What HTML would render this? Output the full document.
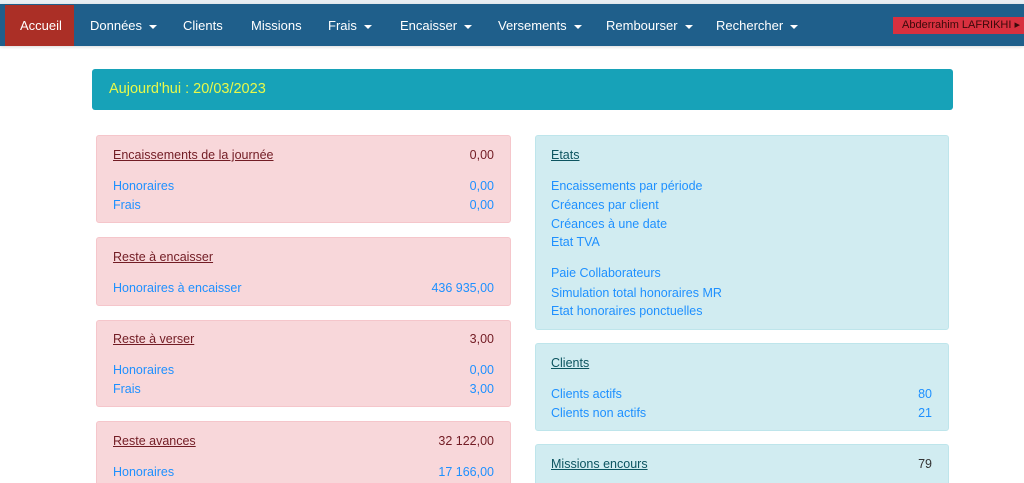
<!DOCTYPE html>
<html><head><meta charset="utf-8"><style>
*{margin:0;padding:0;box-sizing:border-box}
html,body{width:1024px;height:483px;overflow:hidden}
body{background:#fff;font-family:"Liberation Sans",sans-serif;position:relative}
.nav{position:absolute;left:0;top:4px;width:1024px;height:42px;background:#1f5f8b;box-shadow:0 1px 3px rgba(0,0,0,.15)}
.topline{position:absolute;left:0;top:0;width:1024px;height:4px;background:#e8eef3}
.ni{position:absolute;top:18px;color:#fff;font-size:13px;line-height:16px;white-space:nowrap}
.car{display:inline-block;width:0;height:0;border-left:4px solid transparent;border-right:4px solid transparent;border-top:4px solid #fff;margin-left:7px;vertical-align:middle}
.acc{position:absolute;left:5px;top:5px;width:69px;height:41px;background:#ab2f26}
.user{position:absolute;left:893px;top:17px;width:131px;height:17px;background:#d8303f;color:#3a0a0a;font-size:11px;line-height:17px;padding-left:9px;white-space:nowrap;overflow:hidden}
.ban{position:absolute;left:92px;top:69px;width:861px;height:41px;background:#17a2b8;border-radius:3px;color:#e8f94a;font-size:14.5px;line-height:41px;padding-left:17px}
.box{position:absolute;border-radius:3px}
.r{background:#f8d7da;border:1px solid #f5c6cb}
.b{background:#d1ecf1;border:1px solid #bee5eb}
.t{position:absolute;font-size:12.5px;line-height:16px;white-space:nowrap;font-family:"Liberation Sans","DejaVu Sans",sans-serif}
.h{text-decoration:underline}
.hr{color:#721c24}.hb{color:#0c5460}
.l{color:#1e90ff}
</style></head><body>
<div class="topline"></div>
<div class="nav"></div>
<div class="acc"></div>
<div class="ni" style="left:20px">Accueil</div>
<div class="ni" style="left:90px">Données<span class="car"></span></div>
<div class="ni" style="left:183px">Clients</div>
<div class="ni" style="left:251px">Missions</div>
<div class="ni" style="left:328px">Frais<span class="car"></span></div>
<div class="ni" style="left:400px">Encaisser<span class="car"></span></div>
<div class="ni" style="left:498px">Versements<span class="car"></span></div>
<div class="ni" style="left:606px">Rembourser<span class="car"></span></div>
<div class="ni" style="left:716px">Rechercher<span class="car"></span></div>
<div class="user">Abderrahim LAFRIKHI &#x25B8;</div>
<div class="ban">Aujourd'hui : 20/03/2023</div>

<div class="box r" style="left:96px;top:135px;width:415px;height:88px"></div>
<div class="box r" style="left:96px;top:237px;width:415px;height:69px"></div>
<div class="box r" style="left:96px;top:320px;width:415px;height:87px"></div>
<div class="box r" style="left:96px;top:421px;width:415px;height:80px"></div>

<div class="box b" style="left:535px;top:135px;width:414px;height:195px"></div>
<div class="box b" style="left:535px;top:343px;width:414px;height:88px"></div>
<div class="box b" style="left:535px;top:444px;width:414px;height:60px"></div>

<div class="t h hr" style="left:113px;top:147px">Encaissements de la journée</div>
<div class="t hr" style="right:530px;top:147px">0,00</div>
<div class="t l" style="left:113px;top:178px">Honoraires</div>
<div class="t l" style="right:530px;top:178px">0,00</div>
<div class="t l" style="left:113px;top:197px">Frais</div>
<div class="t l" style="right:530px;top:197px">0,00</div>

<div class="t h hr" style="left:113px;top:249px">Reste à encaisser</div>
<div class="t l" style="left:113px;top:280px">Honoraires à encaisser</div>
<div class="t l" style="right:530px;top:280px">436 935,00</div>

<div class="t h hr" style="left:113px;top:331px">Reste à verser</div>
<div class="t hr" style="right:530px;top:331px">3,00</div>
<div class="t l" style="left:113px;top:362px">Honoraires</div>
<div class="t l" style="right:530px;top:362px">0,00</div>
<div class="t l" style="left:113px;top:381px">Frais</div>
<div class="t l" style="right:530px;top:381px">3,00</div>

<div class="t h hr" style="left:113px;top:433px">Reste avances</div>
<div class="t hr" style="right:530px;top:433px">32 122,00</div>
<div class="t l" style="left:113px;top:464px">Honoraires</div>
<div class="t l" style="right:530px;top:464px">17 166,00</div>

<div class="t h hb" style="left:551px;top:147px">Etats</div>
<div class="t l" style="left:551px;top:178px">Encaissements par période</div>
<div class="t l" style="left:551px;top:197px">Créances par client</div>
<div class="t l" style="left:551px;top:216px">Créances à une date</div>
<div class="t l" style="left:551px;top:234px">Etat TVA</div>
<div class="t l" style="left:551px;top:265px">Paie Collaborateurs</div>
<div class="t l" style="left:551px;top:285px">Simulation total honoraires MR</div>
<div class="t l" style="left:551px;top:303px">Etat honoraires ponctuelles</div>

<div class="t h hb" style="left:551px;top:355px">Clients</div>
<div class="t l" style="left:551px;top:386px">Clients actifs</div>
<div class="t l" style="right:92px;top:386px">80</div>
<div class="t l" style="left:551px;top:405px">Clients non actifs</div>
<div class="t l" style="right:92px;top:405px">21</div>

<div class="t h hb" style="left:551px;top:456px">Missions encours</div>
<div class="t" style="right:92px;top:456px;color:#333">79</div>
</body></html>
